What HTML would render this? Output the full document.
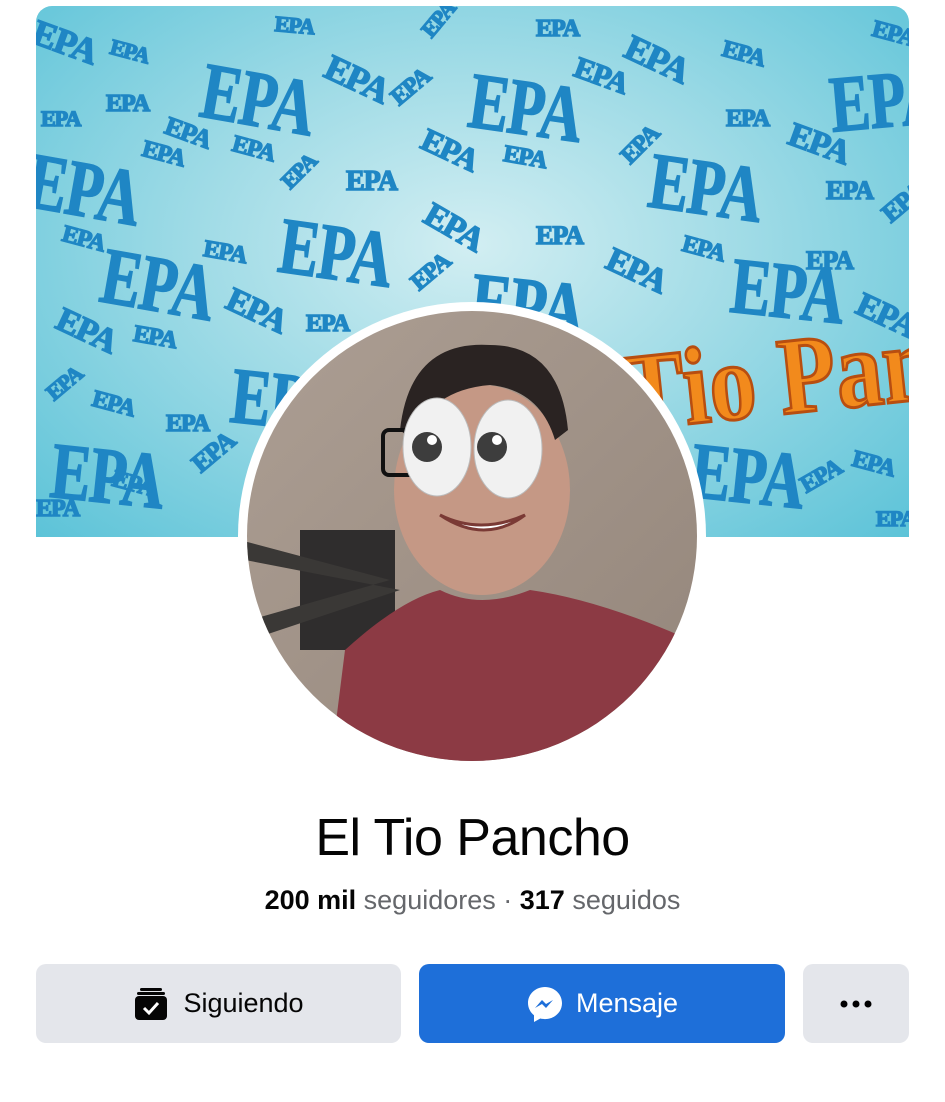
<!DOCTYPE html>
<html><head><meta charset="utf-8"><style>
body{margin:0;background:#fff;width:945px;height:1102px;overflow:hidden;font-family:"Liberation Sans",Arial,sans-serif;position:relative}
#cover{position:absolute;left:36px;top:6px;width:873px;height:531px;border-radius:16px 16px 0 0;overflow:hidden;
background:radial-gradient(ellipse at 50% 45%,#d2eef2 0%,#9fdbe6 45%,#5cc3d8 100%)}
#cover span{position:absolute;font-family:"Liberation Serif",serif;font-weight:bold;color:#1f86c4;white-space:nowrap;transform-origin:0 0;letter-spacing:-1px;-webkit-text-stroke:1.5px #1f86c4}
#tp{position:absolute;left:580px;top:325px;font-family:"Liberation Serif",serif;font-weight:bold;font-size:110px;color:#f28a1c;-webkit-text-stroke:3px #b84e10;transform:rotate(-6deg) scaleX(.85);transform-origin:0 0;white-space:nowrap}
.name{position:absolute;top:808px;left:0;width:945px;text-align:center;font-size:52px;color:#050505;letter-spacing:-0.5px}
.stats{position:absolute;top:885px;left:0;width:945px;text-align:center;font-size:27px;color:#65676b}
.stats b{color:#050505;font-weight:bold}
.btn{position:absolute;top:964px;height:79px;border-radius:10px;display:flex;align-items:center;justify-content:center;font-size:27px}
</style></head><body>
<div id="cover">
<span style="left:174px;top:40px;font-size:80px;transform:rotate(10deg) scaleX(.75)">EPA</span>
<span style="left:440px;top:50px;font-size:80px;transform:rotate(8deg) scaleX(.75)">EPA</span>
<span style="left:790px;top:55px;font-size:80px;transform:rotate(-5deg) scaleX(.75)">EPA</span>
<span style="left:0px;top:130px;font-size:80px;transform:rotate(10deg) scaleX(.75)">EPA</span>
<span style="left:620px;top:130px;font-size:80px;transform:rotate(8deg) scaleX(.75)">EPA</span>
<span style="left:74px;top:225px;font-size:80px;transform:rotate(10deg) scaleX(.75)">EPA</span>
<span style="left:250px;top:195px;font-size:80px;transform:rotate(8deg) scaleX(.75)">EPA</span>
<span style="left:700px;top:235px;font-size:80px;transform:rotate(6deg) scaleX(.75)">EPA</span>
<span style="left:440px;top:250px;font-size:80px;transform:rotate(6deg) scaleX(.75)">EPA</span>
<span style="left:200px;top:345px;font-size:80px;transform:rotate(6deg) scaleX(.75)">EPA</span>
<span style="left:20px;top:420px;font-size:80px;transform:rotate(6deg) scaleX(.75)">EPA</span>
<span style="left:660px;top:420px;font-size:80px;transform:rotate(6deg) scaleX(.75)">EPA</span>
<span style="left:5px;top:5px;font-size:36px;transform:rotate(20deg)">EPA</span>
<span style="left:78px;top:28px;font-size:22px;transform:rotate(15deg)">EPA</span>
<span style="left:240px;top:5px;font-size:22px;transform:rotate(5deg)">EPA</span>
<span style="left:300px;top:40px;font-size:36px;transform:rotate(25deg)">EPA</span>
<span style="left:380px;top:20px;font-size:22px;transform:rotate(-50deg)">EPA</span>
<span style="left:500px;top:10px;font-size:24px">EPA</span>
<span style="left:545px;top:45px;font-size:30px;transform:rotate(20deg)">EPA</span>
<span style="left:600px;top:20px;font-size:36px;transform:rotate(25deg)">EPA</span>
<span style="left:690px;top:30px;font-size:24px;transform:rotate(15deg)">EPA</span>
<span style="left:840px;top:10px;font-size:24px;transform:rotate(15deg)">EPA</span>
<span style="left:70px;top:85px;font-size:24px">EPA</span>
<span style="left:135px;top:105px;font-size:26px;transform:rotate(20deg)">EPA</span>
<span style="left:5px;top:100px;font-size:22px">EPA</span>
<span style="left:350px;top:85px;font-size:24px;transform:rotate(-40deg)">EPA</span>
<span style="left:690px;top:100px;font-size:24px">EPA</span>
<span style="left:760px;top:110px;font-size:34px;transform:rotate(20deg)">EPA</span>
<span style="left:395px;top:115px;font-size:32px;transform:rotate(25deg)">EPA</span>
<span style="left:470px;top:135px;font-size:24px;transform:rotate(10deg)">EPA</span>
<span style="left:580px;top:145px;font-size:24px;transform:rotate(-45deg)">EPA</span>
<span style="left:110px;top:130px;font-size:24px;transform:rotate(15deg)">EPA</span>
<span style="left:200px;top:125px;font-size:24px;transform:rotate(15deg)">EPA</span>
<span style="left:310px;top:160px;font-size:28px">EPA</span>
<span style="left:240px;top:170px;font-size:22px;transform:rotate(-45deg)">EPA</span>
<span style="left:400px;top:190px;font-size:34px;transform:rotate(30deg)">EPA</span>
<span style="left:790px;top:170px;font-size:26px">EPA</span>
<span style="left:840px;top:200px;font-size:26px;transform:rotate(-40deg)">EPA</span>
<span style="left:30px;top:215px;font-size:24px;transform:rotate(15deg)">EPA</span>
<span style="left:170px;top:230px;font-size:24px;transform:rotate(10deg)">EPA</span>
<span style="left:500px;top:215px;font-size:26px">EPA</span>
<span style="left:580px;top:235px;font-size:34px;transform:rotate(25deg)">EPA</span>
<span style="left:650px;top:225px;font-size:24px;transform:rotate(15deg)">EPA</span>
<span style="left:770px;top:240px;font-size:26px">EPA</span>
<span style="left:830px;top:280px;font-size:34px;transform:rotate(25deg)">EPA</span>
<span style="left:30px;top:295px;font-size:34px;transform:rotate(25deg)">EPA</span>
<span style="left:100px;top:315px;font-size:24px;transform:rotate(10deg)">EPA</span>
<span style="left:200px;top:275px;font-size:34px;transform:rotate(25deg)">EPA</span>
<span style="left:270px;top:305px;font-size:24px">EPA</span>
<span style="left:370px;top:270px;font-size:24px;transform:rotate(-40deg)">EPA</span>
<span style="left:60px;top:380px;font-size:24px;transform:rotate(15deg)">EPA</span>
<span style="left:130px;top:405px;font-size:24px">EPA</span>
<span style="left:5px;top:380px;font-size:22px;transform:rotate(-40deg)">EPA</span>
<span style="left:80px;top:460px;font-size:24px;transform:rotate(15deg)">EPA</span>
<span style="left:150px;top:450px;font-size:26px;transform:rotate(-40deg)">EPA</span>
<span style="left:0px;top:490px;font-size:24px">EPA</span>
<span style="left:760px;top:470px;font-size:24px;transform:rotate(-30deg)">EPA</span>
<span style="left:820px;top:440px;font-size:24px;transform:rotate(15deg)">EPA</span>
<span style="left:840px;top:500px;font-size:22px">EPA</span>
<div id="tp">Tio Panc</div>
</div>

<svg style="position:absolute;left:0;top:0" width="945" height="1102">
<defs><clipPath id="c"><circle cx="472" cy="536" r="225"/></clipPath>
<linearGradient id="wall" x1="0" y1="0" x2="1" y2="1"><stop offset="0" stop-color="#ad9f94"/><stop offset="1" stop-color="#93857a"/></linearGradient></defs>
<circle cx="472" cy="536" r="234" fill="#fff"/>
<g clip-path="url(#c)">
<rect x="240" y="300" width="470" height="470" fill="url(#wall)"/>
<rect x="300" y="530" width="95" height="120" fill="#2f2d2d"/>
<path d="M240 540 L390 580 L250 620 L250 640 L400 590 L245 560Z" fill="#3a3836"/>
<path d="M330 770 L345 650 Q400 600 440 590 Q480 610 530 590 Q600 600 690 640 L710 770Z" fill="#8c3a44"/>
<ellipse cx="482" cy="490" rx="88" ry="105" fill="#c59885"/>
<path d="M400 430 Q410 340 490 345 Q560 345 568 430 L555 440 Q540 390 490 385 Q430 390 412 440Z" fill="#2a2322"/>
<path d="M440 515 Q480 535 525 515 Q485 545 440 515Z" fill="#fff" stroke="#7a3a35" stroke-width="3"/>
<rect x="383" y="430" width="45" height="45" rx="6" fill="none" stroke="#111" stroke-width="4"/>
<ellipse cx="437" cy="447" rx="34" ry="49" fill="#f1f1f1" stroke="#bbb"/>
<ellipse cx="508" cy="449" rx="34" ry="49" fill="#f1f1f1" stroke="#bbb"/>
<circle cx="427" cy="447" r="15" fill="#3d3d3d"/><circle cx="492" cy="447" r="15" fill="#3d3d3d"/>
<circle cx="432" cy="440" r="5" fill="#fff"/><circle cx="497" cy="440" r="5" fill="#fff"/>
</g></svg>

<div class="name">El Tio Pancho</div>
<div class="stats"><b>200 mil</b> seguidores · <b>317</b> seguidos</div>

<div class="btn" style="left:36px;width:365px;background:#e4e6eb;color:#050505">
<svg width="36" height="36" viewBox="0 0 36 36" style="margin-right:14px"><rect x="7" y="2" width="22" height="3" rx="1.5" fill="#050505"/><rect x="4" y="6" width="28" height="3" rx="1.5" fill="#050505"/><rect x="2" y="10" width="32" height="24" rx="4" fill="#050505"/><path d="M11 22 L16 27 L25 17" stroke="#fff" stroke-width="3" fill="none"/></svg>Siguiendo</div>
<div class="btn" style="left:419px;width:366px;background:#1e6fd9;color:#fff">
<svg width="38" height="38" viewBox="0 0 38 38" style="margin-right:12px"><path d="M19 2C9.6 2 2 9 2 18c0 5 2.4 9.4 6 12.3V37l6.3-3.5c1.5.4 3 .6 4.7.6 9.4 0 17-7 17-16S28.4 2 19 2z" fill="#fff"/><path d="M9 23l7-8 4 4 7-4-7 8-4-4z" fill="#1e6fd9"/></svg>Mensaje</div>
<div class="btn" style="left:803px;width:106px;background:#e4e6eb;color:#050505;font-size:30px;font-weight:bold">
<svg width="32" height="8"><circle cx="4" cy="4" r="3.5"/><circle cx="16" cy="4" r="3.5"/><circle cx="28" cy="4" r="3.5"/></svg></div>
</body></html>
